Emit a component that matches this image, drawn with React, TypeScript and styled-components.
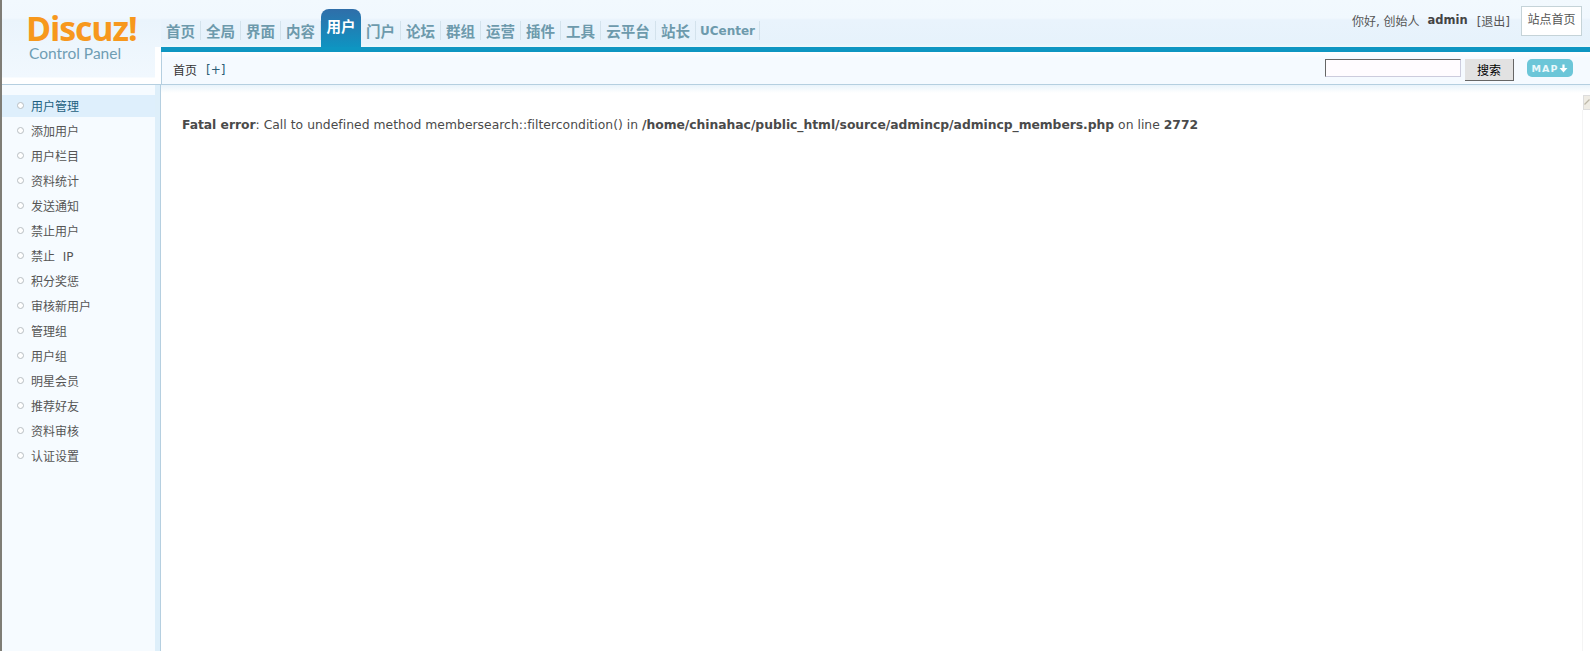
import React from "react";
import styled, { createGlobalStyle } from "styled-components";

const Global = createGlobalStyle`
  html, body { margin: 0; padding: 0; height: 100%; background: #fff; overflow: hidden; }
  body { font-family: "DejaVu Sans", Verdana, "Noto Sans CJK SC", sans-serif; font-size: 12px; color: #444; }
  #root { height: 100%; }
`;

const CJK = `"DejaVu Sans", "Noto Sans CJK SC", sans-serif`;

const Page = styled.div`
  height: 651px;
  border-left: 2px solid #7f7d76;
  display: flex;
  flex-direction: column;
  position: relative;
  overflow: hidden;
`;
const Top = styled.div`
  display: flex;
  height: 85px;
  flex: none;
`;
const LogoCol = styled.div`
  width: 159px;
  flex: none;
  box-sizing: border-box;
  height: 85px;
  border-bottom: 1px solid #b5cfe0;
  background: linear-gradient(#f2f9fe 0, #f1f8fe 18px, #eaf4fc 20px, #f1f8fe 77px, #fff 78px);
  display: flex;
  flex-direction: column;
  padding: 13px 0 0 24px;
  position: relative;
  &::after {
    content: "";
    position: absolute;
    right: 0;
    top: 47px;
    bottom: 0;
    width: 6px;
    background: #fff;
  }
`;
const LogoWord = styled.div`
  font-family: "Open Sans", sans-serif;
  font-weight: 700;
  font-size: 34px;
  line-height: 30px;
  letter-spacing: -1.15px;
  color: #f7981d;
  white-space: nowrap;
`;
const LogoSub = styled.div`
  font-family: "Lato", sans-serif;
  font-size: 15.5px;
  line-height: 18px;
  color: #6f9db3;
  margin: 1px 0 0 3px;
`;
const MainHead = styled.div`
  flex: 1;
  display: flex;
  flex-direction: column;
`;
const NavBar = styled.div`
  height: 47px;
  flex: none;
  display: flex;
  justify-content: space-between;
  background: linear-gradient(#f2f9fe 0, #f1f8fe 18px, #e9f3fc 20px, #e6f2fb 43px, #ecf8fd 47px);
`;
const Tabs = styled.div`
  display: flex;
  align-items: flex-end;
`;
const Tab = styled.div<{ $w: number; $active?: boolean }>`
  width: ${(p) => p.$w}px;
  height: ${(p) => (p.$active ? 38 : 19)}px;
  margin-bottom: ${(p) => (p.$active ? 0 : 7)}px;
  box-sizing: border-box;
  display: flex;
  align-items: center;
  justify-content: center;
  font-family: ${CJK};
  font-size: 14.5px;
  font-weight: 700;
  color: ${(p) => (p.$active ? "#fff" : "#6d9aac")};
  border-right: ${(p) => (p.$active ? "none" : "1px solid #d3e2ec")};
  background: ${(p) => (p.$active ? "linear-gradient(#2f6ea9, #0f93c1)" : "none")};
  border-radius: ${(p) => (p.$active ? "8px 8px 0 0" : "0")};
  padding-bottom: ${(p) => (p.$active ? 5 : 1)}px;
`;
const UCenterTab = styled(Tab)`
  font-family: "DejaVu Sans", sans-serif;
  font-size: 12px;
  font-weight: 700;
  padding-bottom: 0;
`;
const UserArea = styled.div`
  display: flex;
  align-items: flex-start;
  padding: 6px 8px 0 0;
`;
const Greeting = styled.div`
  display: flex;
  align-items: center;
  gap: 8px;
  height: 28px;
  margin-right: 11px;
  font-family: ${CJK};
  font-size: 12px;
  color: #555;
`;
const UserName = styled.b`
  color: #444;
  font-size: 11.5px;
  margin: 0 1px 0 0;
`;
const SiteLink = styled.div`
  width: 61px;
  height: 30px;
  box-sizing: border-box;
  border: 1px solid #c5d3d8;
  background: #fff;
  display: flex;
  align-items: center;
  justify-content: center;
  font-family: ${CJK};
  font-size: 12px;
  color: #555;
  padding-bottom: 5px;
`;
const BlueBar = styled.div`
  height: 5px;
  flex: none;
  background: #0e96c2;
`;
const SubNav = styled.div`
  flex: 1;
  box-sizing: border-box;
  border-left: 1px solid #b5cfe0;
  border-bottom: 1px solid #b5cfe0;
  background: linear-gradient(#ffffff, #f5faff 6px);
  display: flex;
  align-items: flex-start;
  justify-content: space-between;
  padding: 7px 17px 0 11px;
  font-family: ${CJK};
  font-size: 12px;
`;
const Crumbs = styled.div`
  display: flex;
  gap: 9px;
  height: 18px;
  align-items: center;
  color: #333;
  margin-top: 1px;
`;
const AddLink = styled.span`
  color: #2b5d75;
  padding-top: 1px;
`;
const SearchBox = styled.div`
  display: flex;
  align-items: flex-start;
`;
const SearchInput = styled.input`
  width: 136px;
  height: 18px;
  box-sizing: border-box;
  border: 1px solid;
  border-color: #666 #ccd #ccd #666;
  background: #fffcff;
  padding: 0;
  margin: 0 4px 0 0;
`;
const SearchButton = styled.button`
  width: 49px;
  height: 22px;
  box-sizing: border-box;
  border: none;
  border-right: 1px solid #666;
  border-bottom: 1px solid #666;
  background: #e2e2e2;
  font-family: "Noto Sans CJK SC", sans-serif;
  font-size: 12px;
  color: #000;
  padding: 0;
  margin-right: 13px;
`;
const MapBtn = styled.div`
  width: 46px;
  height: 18px;
  border-radius: 5px;
  background: #6cc6d8;
  color: #eaf8fb;
  font-family: "DejaVu Sans", sans-serif;
  font-size: 9.5px;
  font-weight: 700;
  letter-spacing: 1px;
  display: flex;
  align-items: center;
  justify-content: center;
  gap: 1px;
`;
const Bottom = styled.div`
  flex: 1;
  display: flex;
  min-height: 0;
`;
const Sidebar = styled.div`
  width: 159px;
  flex: none;
  box-sizing: border-box;
  border-right: 1px solid #b5cfe0;
  background: linear-gradient(90deg, #f6fbff 0, #f6fbff 153px, #deeffa 153px);
  padding-top: 10px;
  font-family: ${CJK};
  font-size: 12px;
`;
const MenuItem = styled.div<{ $active?: boolean }>`
  width: 153px;
  height: 22px;
  margin-bottom: 3px;
  display: flex;
  align-items: center;
  gap: 7px;
  padding: 0 0 2px 15px;
  box-sizing: border-box;
  color: ${(p) => (p.$active ? "#1d5f80" : "#555")};
  background: ${(p) => (p.$active ? "#deeffc" : "none")};
`;
const Bullet = styled.i`
  width: 7px;
  height: 7px;
  box-sizing: border-box;
  border: 1px solid #b8bec2;
  border-radius: 50%;
  background: #fff;
  flex: none;
`;
const Content = styled.div`
  flex: 1;
  background: linear-gradient(#e9f3fb, #fff 8px);
  padding: 31px 0 0 21px;
`;
const ErrorLine = styled.div`
  font-size: 12.35px;
  line-height: 18px;
  letter-spacing: 0.03px;
  color: #4a4a4a;
  white-space: nowrap;
`;
const Strong = styled.b`
  letter-spacing: -0.04px;
`;
const Handle = styled.div`
  position: absolute;
  right: 0;
  top: 95px;
  width: 7px;
  height: 15px;
  background: #efece4;
  border: 1px solid #ddd;
  border-right: none;
  box-sizing: border-box;
  display: flex;
`;
const HandleLine = styled.div`
  position: absolute;
  right: 7px;
  top: 110px;
  bottom: 0;
  width: 1px;
  background: #f4f4f4;
`;

const tabs: [string, number][] = [
  ["首页", 40], ["全局", 40], ["界面", 40], ["内容", 40],
];
const tabs2: [string, number][] = [
  ["门户", 40], ["论坛", 40], ["群组", 40], ["运营", 40], ["插件", 40], ["工具", 40], ["云平台", 55], ["站长", 40],
];
const menu = ["用户管理","添加用户","用户栏目","资料统计","发送通知","禁止用户","禁止\u00a0\u00a0IP","积分奖惩","审核新用户","管理组","用户组","明星会员","推荐好友","资料审核","认证设置"];

export default function App() {
  return (
    <Page>
      <Global />
      <Top>
        <LogoCol>
          <LogoWord>Discuz!</LogoWord>
          <LogoSub>Control Panel</LogoSub>
        </LogoCol>
        <MainHead>
          <NavBar>
            <Tabs>
              {tabs.map(([t, w]) => <Tab key={t} $w={w}>{t}</Tab>)}
              <Tab $w={40} $active>用户</Tab>
              {tabs2.map(([t, w]) => <Tab key={t} $w={w}>{t}</Tab>)}
              <UCenterTab $w={64}>UCenter</UCenterTab>
            </Tabs>
            <UserArea>
              <Greeting>
                <span>你好, 创始人</span>
                <UserName>admin</UserName>
                <span>[退出]</span>
              </Greeting>
              <SiteLink>站点首页</SiteLink>
            </UserArea>
          </NavBar>
          <BlueBar />
          <SubNav>
            <Crumbs>
              <span>首页</span>
              <AddLink>[+]</AddLink>
            </Crumbs>
            <SearchBox>
              <SearchInput />
              <SearchButton>搜索</SearchButton>
              <MapBtn>
                MAP
                <svg width="9" height="9" viewBox="0 0 9 9" aria-hidden="true">
                  <path d="M3.4 0.5h2.2v3.6h2.9L4.5 8.5 0.5 4.1h2.9z" fill="#fff" />
                </svg>
              </MapBtn>
            </SearchBox>
          </SubNav>
        </MainHead>
      </Top>
      <Bottom>
        <Sidebar>
          {menu.map((m, i) => (
            <MenuItem key={m} $active={i === 0}>
              <Bullet />
              {m}
            </MenuItem>
          ))}
        </Sidebar>
        <Content>
          <ErrorLine>
            <Strong>Fatal error</Strong>: Call to undefined method membersearch::filtercondition() in <Strong>/home/chinahac/public_html/source/admincp/admincp_members.php</Strong> on line <Strong>2772</Strong>
          </ErrorLine>
        </Content>
      </Bottom>
      <Handle>
        <svg width="6" height="13" viewBox="0 0 6 13" aria-hidden="true">
          <path d="M0.5 8.5L5.5 3.5" stroke="#bdb8a8" strokeWidth="1.2" fill="none" />
        </svg>
      </Handle>
      <HandleLine />
    </Page>
  );
}
